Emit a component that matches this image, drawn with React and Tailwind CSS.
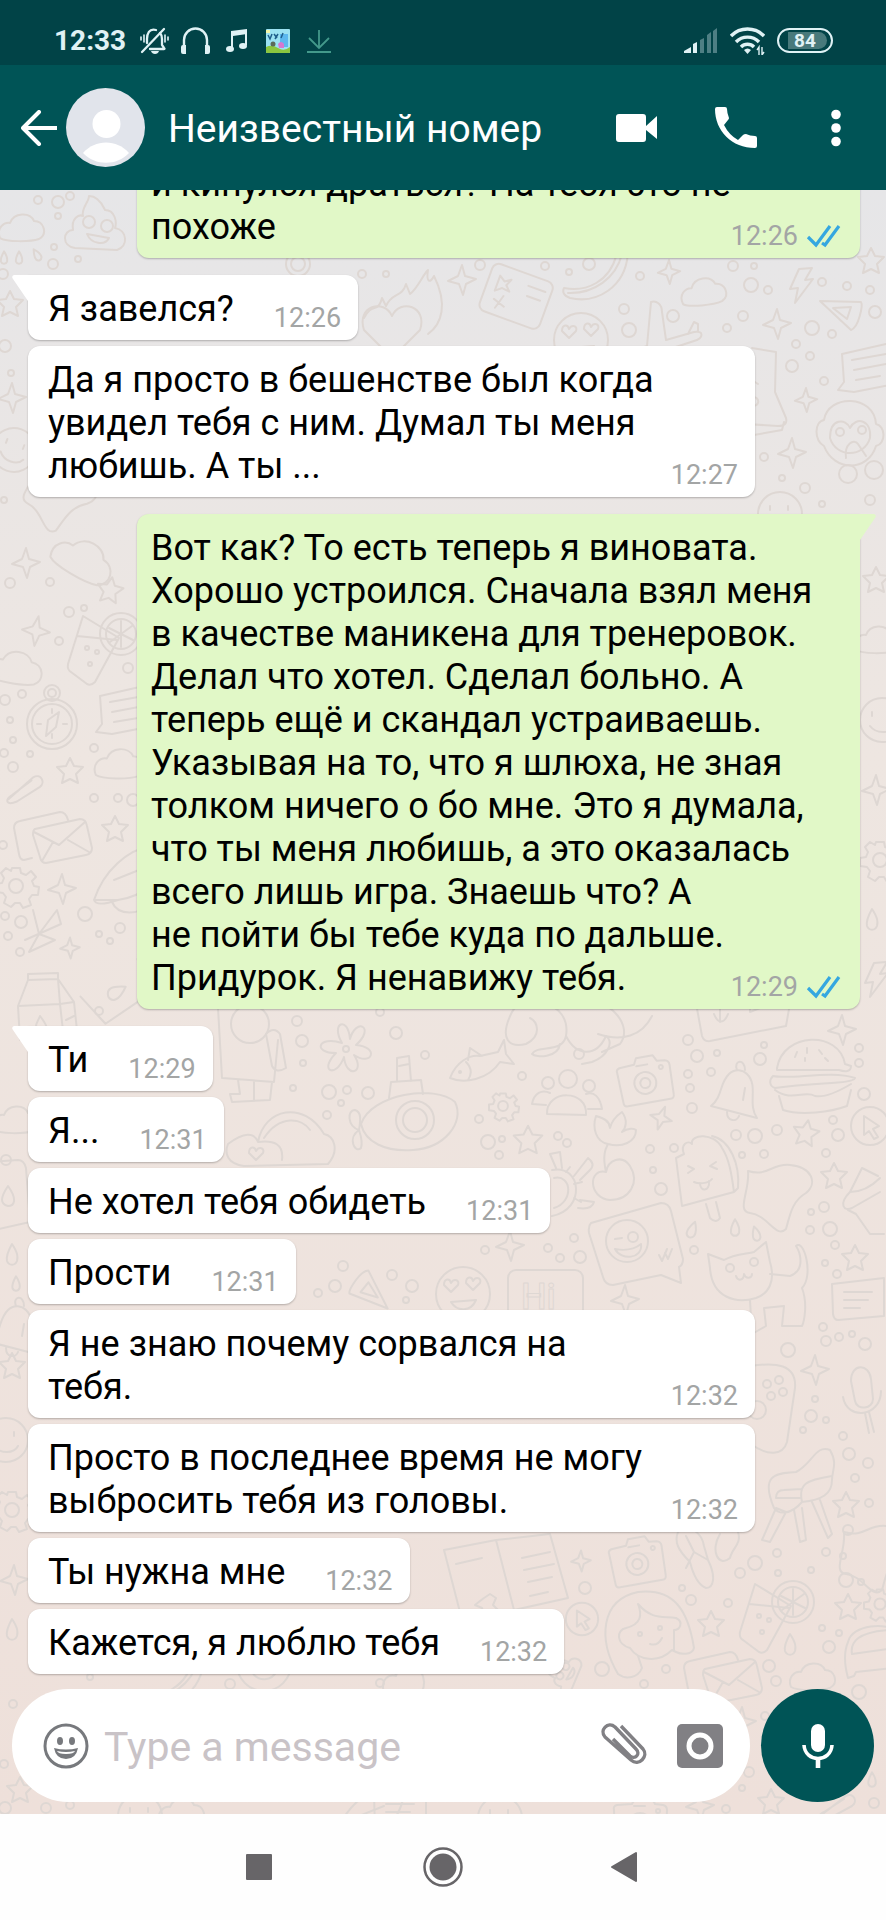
import React, { useState } from 'react';

const messages = [
  { id: 1, from: 'me', text: 'и кинулся драться? На тебя это не\nпохоже', time: '12:26', wide: true },
  { id: 2, from: 'them', text: 'Я завелся?', time: '12:26', first: true },
  { id: 3, from: 'them', text: 'Да я просто в бешенстве был когда\nувидел тебя с ним. Думал ты меня\nлюбишь. А ты ...', time: '12:27', wide: true },
  {
    id: 4,
    from: 'me',
    text: 'Вот как? То есть теперь я виновата.\nХорошо устроился. Сначала взял меня\nв качестве маникена для тренеровок.\nДелал что хотел. Сделал больно. А\nтеперь ещё и скандал устраиваешь.\nУказывая на то, что я шлюха, не зная\nтолком ничего о бо мне. Это я думала,\nчто ты меня любишь, а это оказалась\nвсего лишь игра. Знаешь что? А\nне пойти бы тебе куда по дальше.\nПридурок. Я ненавижу тебя.',
    time: '12:29',
    first: true,
    wide: true,
  },
  { id: 5, from: 'them', text: 'Ти', time: '12:29', first: true },
  { id: 6, from: 'them', text: 'Я...', time: '12:31' },
  { id: 7, from: 'them', text: 'Не хотел тебя обидеть', time: '12:31' },
  { id: 8, from: 'them', text: 'Прости', time: '12:31' },
  { id: 9, from: 'them', text: 'Я не знаю почему сорвался на\nтебя.', time: '12:32', wide: true },
  { id: 10, from: 'them', text: 'Просто в последнее время не могу\nвыбросить тебя из головы.', time: '12:32', wide: true },
  { id: 11, from: 'them', text: 'Ты нужна мне', time: '12:32' },
  { id: 12, from: 'them', text: 'Кажется, я люблю тебя', time: '12:32' },
];

// Wallpaper doodles, each drawn around 0,0
const shapes = {
  star4: <path d="M0-15 L3-4 L14-1 L4 4 L1 15 L-3 4 L-14 1 L-4-4Z" />,
  star5: <path d="M0-13 L4-5 L13-4 L6 3 L8 12 L0 8 L-8 12 L-6 3 L-13-4 L-4-5Z" />,
  cloud: <path d="M-22 10 C-26 0-18-6-12-5 C-8-16 8-16 12-7 C22-7 26 6 17 11 C8 14-16 14-22 10Z" />,
  drop: <path d="M0-11 C6-2 6 2 5 6 C3 11-3 11-5 6 C-6 2-5-2 0-11Z" />,
  bolt: <path d="M-2-17 L11-18 L4-6 L12-7 L-6 17 L-3 2 L-11 3Z" />,
  heart: <path d="M0 14 L-14 0 C-18-12-4-16 0-7 C4-16 18-12 14 0Z" />,
  poop: (
    <>
      <path d="M-20 28 C-34 26-32 10-22 10 C-24-2-16-6-12-4 C-14-12-6-18-6-24 C4-24 8-14 10-10 C20-10 22 2 20 8 C32 10 34 26 22 30Z" />
      <circle cx="-6" cy="2" r="6" /><circle cx="12" cy="6" r="6" />
      <path d="M-8 14 C-4 24 10 26 14 18Z" />
    </>
  ),
  card: (
    <>
      <rect x="-34" y="-25" width="64" height="50" rx="7" />
      <path d="M6-14h18M8-4h14M-24-14l6 4 6-4-3 7 5 5-8-1-6 5v-8Z M-22 10l12 4M-14 4l-4 14" />
    </>
  ),
  banana: <path d="M-30 14 C-10 18 18 10 24-26 C30-24 32-24 34-22 C32 14 2 30-24 24 C-30 22-32 18-30 14Z M-26 19 C0 20 22 4 28-20" />,
  lovely: (
    <>
      <circle r="27" />
      <path d="M-12-2 l-7-7 c0-7 6-7 7-2 c3-5 9-3 7 2Z M10-4 l-7-7 c0-7 6-7 7-2 c3-5 9-3 7 2Z M-12 8 C-6 18 8 18 13 6Z" />
    </>
  ),
  plane: <path d="M-30 26 L-13 20 L-9-24 C-4-26 2-22 2-14 L6 14 L34 6 C44 4 44 12 34 15 L-24 34 Z M28 8 L34-4 L38-2 L38 6" />,
  sail: <path d="M-21-12 L20-11 C22-8 18 14 10 17Z M-8-5 L10-6 L6 6Z" />,
  chat: (
    <>
      <path d="M-20-14 L24-24 Q30-24 32-18 L34 10 Q34 16 28 17 L-8 24 L-24 22 L-18 14Z" />
      <path d="M-10-8 L24-14M-8 2 L24-4M-6 12 L18 8" />
    </>
  ),
  monkey: (
    <>
      <path d="M-24 12 C-34 6-34-12-24-14 C-20-40 26-40 28-10 C38-8 38 10 28 12 C20 38-14 38-24 12Z" />
      <path d="M-18 4 C-18-16-2-16 2-6 C8-18 24-14 22 4 C16 24-12 24-18 4Z M-2 24 C-4 10 6 4 10 10 L18 22" />
      <circle cx="-8" cy="-2" r="4" /><circle cx="14" cy="-4" r="4" />
      <circle cx="0" cy="40" r="9" /><circle cx="26" cy="36" r="9" />
    </>
  ),
  bottle: <path d="M-16-50 L8-46 L7-6 L18 20 Q20 28 10 28 L-22 26 M-22-22 L-10-14M-22 6 C-14-10-4 6-14 8 M-20 38 L14 32 L16 24" />,
  cup: (
    <>
      <path d="M-10-36 L26-14 L2 30 Q-2 34-6 32 L-22 20 Q-26 18-25 12Z M-16-16 L24-12" />
      <circle cx="28" cy="-18" r="21" /><circle cx="28" cy="-18" r="15" />
      <path d="M28-31v26M16-24l24 12M17-10l22-16" />
      <circle cx="-6" cy="-4" r="2" /><circle cx="4" cy="0" r="2" /><circle cx="-3" cy="12" r="2" />
    </>
  ),
  compass: (
    <>
      <circle r="25" /><circle r="20" /><circle cy="-31" r="8" /><circle cy="-31" r="4" />
      <path d="M7-12 L4 3 L-6 12 L-4-4Z M-15 0h4M11 0h4M0 14v-4M0-15v4" />
    </>
  ),
  clip: <path d="M-16 10 L10-10 C18-14 22-4 16 0 L-8 13 C-20 17-20 10-12 6 L8-7" />,
  mail: (
    <>
      <path d="M-20 20 L-28 22 Q-32 22-33 16 L-38-10 Q-38-16-32-17 L8-26 Q14-26 16-18" />
      <path d="M-17-9 L28-19 Q34-19 35-12 L40 10 Q40 16 34 17 L-6 25 Q-11 25-12 19 L-19-3 Q-19-8-17-9Z M-18-6 L7 7 L33-16 M-10 23 L1 4M37 14 L16 2" />
    </>
  ),
  gear: (
    <>
      <circle r="7" />
      <path d="M-4-18h8l1 5 5 2 5-4 5 6-4 4 2 5 5 1-1 8-6 0-3 4 2 6-8 3-3-5h-5l-4 4-7-4 2-6-3-4-7-1v-8l6-1 2-5-3-5 5-5 5 3Z" />
    </>
  ),
  rocket: <path d="M-26 22 C-16-8 8-28 30-32 L44-22 C40 4 24 18-2 22Z M-26 22 C-24 28-14 26-2 22 M-6 2 L24-10 M-8 24 C-2 38 20 38 30 24" />,
  milk: <path d="M-28 10 L-18-16 L12-17 L28 6 L32 44 M-28 10 L14 8 L28 6M14 8 L12-17M-28 10 L-26 44M14 8 L18 44M-18-16v-6l30-1v6M-6 40 C-14 30-8 26-6 20 C0 28 4 34-2 40M20 24l8-4" />,
  rune: <path d="M-10-20 L-4 4 L14-20 L18-6 L-18 10 M-4 4 L-14 22 L12 10 L-4 4" />,
  fish: (
    <>
      <path d="M-30 16 C-24 0-10-8 0-6 L18-10 L24-22 L26-8 L34 2 L20 0 C8 18-16 22-30 16Z M-12-2 L-10-14 L2-6M-14 0 C-8 6-8 12-12 18" />
      <circle cx="-20" cy="10" r="1" />
    </>
  ),
  snake: <path d="M-50-18 C-40-38 10-30 4 6 C0 24-24 14-30 24 C-26 28-4 28-2 14 M-50-18 C-64 10-52 18-36 14 C-20 6-24-8-32-12 M4 6 C14 26 34 28 44 6 C52 12 46 26 30 32 L20 34 M14-30 C48-34 72-4 58 14 L40 22 M36 4 C60 12 80 6 90-14" />,
  camera: (
    <>
      <path d="M-26-12 Q-27-16-23-17 L-8-18 L-5-24 L12-24 L15-18 L23-17 Q27-16 27-12 L26 18 Q26 22 22 22 L-21 22 Q-25 22-25 18Z" />
      <circle cy="2" r="11" /><circle cy="2" r="5" /><circle cx="18" cy="-11" r="2" />
      <path d="M-6-16h11" />
    </>
  ),
  bell: <path d="M-24 12 C-12 2-16-10-6-20 C0-26 8-24 12-20 C24-8 12 10 22 24Z M2-24 C-2-34 10-36 10-24M-8 18 C-8 28 2 28 4 22M10-6 L8 6" />,
  burger: (
    <>
      <path d="M-34-8 C-28-44 28-46 34-12 L40-10 C40-4 34-4 28-6 L-34-6Z" />
      <path d="M-38 0 C-20 4 20-6 44 2 C42 8 10 6-36 12 C-42 10-42 4-38 0Z M-36 14 C-20 26-6 14 4 20 C14 22 30 14 40 8 M-32 20 L-28 34 C-10 40 20 36 36 30 L40 14" />
      <path d="M-14-24l-2 5M-4-28v5M8-26l3 4M-6-18v3M14-18l3 3" />
    </>
  ),
  people: (
    <>
      <circle cy="-16" r="9" /><circle cx="-20" cy="-12" r="6" /><circle cx="21" cy="-9" r="6" />
      <path d="M-21 19 C-22-6 20-6 18 20Z M-22 10 L-36 9 C-34-2-26-6-18-2 M20 14 L34 14 C32 2 26-4 18-1" />
    </>
  ),
  sprout: <path d="M-4 16 C-8-2-4-8-2-12 C-14-14-18-28-14-40 C-6-38 0-34 0-28 C2-36 6-40 12-44 C18-36 16-28 12-24 C18-28 24-28 26-26 C26-14 12-8-2-12 M-4 16 C-22 12-22 42 0 44 C20 44 30 26 20 10 C12-2-2 4-4 16" />,
  lolly: (
    <>
      <path d="M-26-16 L-18-20 C-22-30-14-34-10-30 C-12-40 12-42 20-26 C28-14 30 4 32 18 L-20 32Z M10-38 C28-34 38-10 36 14 L32 18" />
      <path d="M4 30 L8 44 Q14 50 18 44 L14 28M-14-8l6 3-6 4M14-12l-6 4 7 3M-8 8 C-4 10 6 10 10 5M-2 9 C-2 18 8 18 7 7" />
    </>
  ),
  pointer: (
    <>
      <circle r="19" />
      <path d="M-6-10 L9 0 L3 3 L8 11 L4 13 L-1 5 L-6 9Z" />
    </>
  ),
  blob: <path d="M-30-24 C-10-18-6-32 12-30 C34-28 40-12 28-2 C14 6 12 20 8 34 C-2 44-10 20-28 18 C-42 16-28-4-30-24Z" />,
  cone: <path d="M-18 2 L-6-22 L10-14 M-18 2 C-4 2 6-6 12-12M-18 2 C-30 14-24 22-16 18 L12 2M-20 20 L-12 24 L2 44 H16" />,
  speech: (
    <>
      <path d="M-44-18 L26-38 Q34-38 36-30 L48 18 Q48 24 44 26 L46 42 L26 34 L-22 44 Q-30 44-32 36 L-46-8 Q-47-15-44-18Z" />
      <circle cx="-8" cy="0" r="21" /><circle cx="-2" cy="-4" r="5" />
      <path d="M-20-2l7-1M-20 8 C-10 10 0 8 6 3 C8 18-14 20-20 8Z M24 14l3 6 5-12M30 12l3 6 4-10" />
    </>
  ),
  cat: (
    <>
      <path d="M-32-16 L-34-30 L-18-24 C-8-30 4-30 12-32 L24-42 L28-22 C34-2 26 10 14 14 C-6 20-30 14-32-16Z" />
      <circle cx="-12" cy="-16" r="4" /><circle cx="12" cy="-22" r="4" />
      <path d="M-6-8 C-4-2 2-4 2-10 C4-4 10-6 10-10M28-10 L48-8 C64-14 58-32 54-38 C62-46 72-8 60 4 C66 20 62 38 60 42 L40 42 L42 22 L22 24 L24 42 L10 50 L8 16" />
    </>
  ),
  note: (
    <>
      <path d="M-26-16 L26-22 L26 16 L-20 20 Q-24 20-25 14Z" />
      <path d="M-14-8h28M-14 0h24M-14 8h16" />
    </>
  ),
  turtle: (
    <>
      <path d="M-8-18 C22-24 26 22-8 28M-6-10 C12-14 14 14-6 20M6-16l4-5M14-4l8-2M14 10l7 4M-4-20 L-10-34 L0-36 L2-20M14-12 L28-30 Q36-24 30-18 L20-8M20 12 L34 14 Q32 22 18 20" />
    </>
  ),
  flower: (
    <>
      <path d="M-4-6 C-16-26 2-34 4-10 C10-32 30-22 10-4 C34-2 26 18 8 6 C20 24 0 30-2 8 C-10 30-28 22-10 4 C-34 4-28-14-4-6Z" />
      <circle r="3" />
    </>
  ),
  sub: (
    <>
      <path d="M-44 6 C-34-24 30-34 50-16 C60 4 40 30 8 32 C-20 34-40 24-44 6Z M-16-20 L-14-36 L16-38 L18-24M-8-37 L-8-60 L4-62 L6-37M-6-52l10-2M-46 12 C-58 8-58-8-50-8 C-44-6-44 0-46 12 C-58 20-50 36-44 30 C-42 24-44 18-46 12" />
      <circle cx="10" cy="2" r="19" /><circle cx="10" cy="2" r="12" />
    </>
  ),
  astronaut: (
    <>
      <circle r="19" cy="-36" />
      <path d="M-32-52 L-28 18 L24 22 L28-20 M16-26 Q24-34 30-26 L36 8 Q26 14 22 6Z M-12 20 L-10 34 L-20 34 L-18 42 L20 40 L22 22M4 22v18" />
    </>
  ),
  walrus: (
    <>
      <path d="M-56 14 C-40 2-30 2-26 12 C-20-22 20-30 40 4 C50 6 56 20 44 34 L-40 36 C-56 34-60 24-56 14Z M-20 8 C-4-16 18-12 26 0M-26 12 C-10 10 0 14-2 30" />
      <path d="M-28 30 l-7-7 c0-7 6-7 7-2 c3-5 9-3 7 2Z" />
    </>
  ),
  chair: <path d="M-36 36 L-22 4 L-12 8 L-28 38Z M-4 6 L2 38 L8 36 L4 4M14-2 L30 34 L34 30 L22-4M-24 4 C-40-34-16-30-2-32 C14-40 18-60 32-54 C40-40 34-34 34-24 C34-10 24-4 4-2 C-8 12-20 10-24 4Z M4-2 C0-20 8-24 34-28M-22-6 Q-22-14-14-14 L4-15M-22-6 L2-6" />,
  pad: (
    <>
      <path d="M-24-44 C0-48 22-46 20-22 L12 32 C8 46-8 46-24 34" />
      <circle cx="-8" cy="-26" r="4" /><circle cx="4" cy="-30" r="4" /><circle cx="-4" cy="-14" r="4" /><circle cx="8" cy="-18" r="4" /><circle cx="-18" cy="0" r="9" />
    </>
  ),
  mic: <path d="M-10-14 C-10-32 8-32 10-16 L12 4 C12 14-4 16-6 6Z M-18 2 C-14 26 20 22 20-4M4 18 L8 38M8 17 L13 37" />,
  book: (
    <>
      <path d="M-56-24 L-4-34 L14 36 L-38 46Z M-4-34 L50-40 L68 24 L14 36" />
      <path d="M-44-10l26-6M-16 24 l6-4 6 4-3 7 5 5-8 1-6 5-2-8-7-3 5-4ZM22-16l28-6M24-4l30-6M28 8l24-5M30 22l18-4" />
    </>
  ),
  girl: (
    <>
      <path d="M-30 44 C-50 10-48-30-10-38 C26-42 40-20 46 18 C44 26 32 24 28 22 L24 20 C10 34-10 30-18 18 C-32 14-32 0-22-2 C-6-6-6-16-10-26 C4-10 14-14 28-12 C36-8 32 0 26 0 L26 20 M-30 44 C-22 50-10 48-6 38 L-10 26" />
      <path d="M2 14 C8 16 12 12 14 8" /><circle cx="-8" cy="4" r="2" /><circle cx="12" cy="-2" r="2" />
    </>
  ),
  sandals: <path d="M-32-30 C-20-40-8-28-6-16 L-2-2 C6 14 4 26-4 26 C-14 22-18 8-20 0 C-32-12-36-20-32-30Z M-24-26 L-16-10 L-24 6M-16-10 L-2-2M10-28 C0-12 8 6 20-4 C22-14 32-18 28-30" />,
  car: <path d="M-20-14 C-16-32 20-34 30-24M-16-2 L28-8M-14 20 L-20 22 Q-26 0-20-14 M-16-2 C-18-14-10-24 20-26M-14 20 L-12 16 L26 12" />,
  flag: <path d="M-36-30 L-28 14 Q-26 20-20 19 L56 4 M56 4 L62-30M-10-20v20M-16-8 C-12 2-6 2-2-8M20-20v10l10-4" />,
  tub: <path d="M-16-34 L12-36 Q18-36 20-28 L24 26 L-12 34M2-10 C12 4 8 10 2 10 C-6 8-6 2 2-10Z" />,
  face: (
    <>
      <circle r="22" />
      <path d="M-10-4v-4M8-4v-4M-12 6 C-6 14 8 14 12 6" />
    </>
  ),
  flame: <path d="M-34 18 C-26 2-20 14-16-2 L-12 6 C-6-8 4-2 8-16 L12-6 C20-12 24-24 30-30 C28-18 32-16 36-24 C50 4 44 24 30 34" />,
  sign: <rect x="-38" y="-20" width="75" height="60" rx="8" />,
};

// name, x, y, angle, size
const doodles = [
  ['cloud', 22, 228], ['poop', 95, 220], ['drop', 4, 258, 0, 0.6], ['drop', 19, 258, 0, 0.6], ['drop', 37, 255, -30, 0.6],
  ['star4', 462, 280], ['card', 518, 297, 20], ['banana', 594, 274], ['star4', 669, 272, 0, 0.8], ['cloud', 704, 292, -6], ['bolt', 801, 286],
  ['sail', 841, 313], ['star5', 871, 261], ['star4', 777, 324], ['lovely', 581, 340], ['plane', 660, 326], ['chat', 862, 368], ['monkey', 848, 434],
  ['bottle', 768, 398], ['star4', 806, 400, 0, 0.8], ['star4', 792, 453], ['face', 780, 514], ['heart', 392, 330, 0, 2], ['flame', 398, 300],
  ['star5', 10, 304], ['star4', 12, 398], ['face', 14, 450, 20], ['blob', 60, 496, 20], ['cloud', 84, 560, 30, 1.4], ['star4', 26, 563],
  ['star5', 110, 590, 10], ['star4', 36, 631, 10], ['cup', 93, 652], ['cloud', 16, 668, 10, 1.2], ['compass', 52, 724], ['chat', 120, 710],
  ['star5', 70, 771], ['clip', 24, 788, -4], ['cloud', 120, 764, 0, 1.1], ['mail', 52, 838], ['star5', 115, 829], ['gear', 16, 886], ['star4', 62, 889],
  ['rocket', 120, 878], ['rune', 43, 930], ['star4', 70, 948, 0, 0.7], ['milk', 46, 996], ['tub', 116, 990, 60], ['star5', 876, 580], ['cloud', 878, 640],
  ['face', 882, 720], ['star4', 876, 790], ['gear', 880, 860], ['drop', 872, 920], ['bolt', 876, 980],
  ['snake', 562, 1030], ['fish', 480, 1062], ['camera', 645, 1081, -10], ['bell', 735, 1094], ['burger', 811, 1076], ['people', 568, 1095],
  ['gear', 503, 1106, 0, 0.7], ['star5', 528, 1140, 0, 1.1], ['star4', 661, 1118, 20, 0.8], ['sprout', 610, 1156], ['lolly', 702, 1174], ['star5', 806, 1133, 10],
  ['pointer', 870, 1126], ['blob', 778, 1195], ['star5', 834, 1176], ['cone', 868, 1190], ['speech', 635, 1241], ['cat', 742, 1284], ['star5', 855, 1258],
  ['note', 858, 1300], ['star4', 625, 1300], ['lovely', 463, 1294], ['turtle', 560, 1188], ['flag', 730, 1022], ['drop', 692, 1230, 20, 0.8],
  ['drop', 735, 1228, 0, 0.8], ['drop', 756, 1234, -15, 0.7], ['star4', 842, 1030], ['flower', 346, 1049], ['sub', 405, 1118], ['astronaut', 250, 1060],
  ['walrus', 284, 1130], ['star4', 510, 1246], ['sail', 372, 1290, 200], ['tub', 6, 1196], ['drop', 12, 1255], ['drop', 16, 1284, 0, 0.7],
  ['bell', 14, 1330], ['star5', 12, 1366], ['cloud', 16, 1120], ['face', 6, 1440], ['gear', 12, 1510], ['star4', 14, 1580], ['drop', 12, 1630],
  ['sign', 546, 1290], ['pad', 775, 1410], ['mic', 861, 1395], ['star4', 815, 1370], ['chair', 798, 1504], ['camera', 637, 1562, -10], ['book', 500, 1574],
  ['star4', 581, 1561, 0, 0.7], ['sandals', 710, 1562], ['girl', 648, 1630], ['star5', 846, 1505], ['blob', 874, 1556], ['cup', 765, 1620],
  ['star5', 711, 1624], ['star5', 848, 1607], ['gear', 880, 1604, 0, 0.8], ['drop', 790, 1645], ['cloud', 813, 1677], ['pointer', 582, 1619, 0, 0.85],
  ['mail', 722, 1678], ['car', 868, 1656], ['poop', 560, 1672, -70, 0.6], ['banana', 170, 1680], ['lovely', 264, 1664],
  ['sprout', 400, 1660], ['star5', 20, 1790], ['face', 140, 1816], ['cloud', 182, 1812], ['rocket', 360, 1816], ['note', 400, 1812], ['face', 500, 1818],
  ['camera', 640, 1822], ['star4', 700, 1806], ['star5', 771, 1802], ['star4', 742, 1722], ['clip', 836, 1806], ['drop', 872, 1780, 0, 0.7],
];

const dots = [
  [58, 202, 6], [38, 200, 4], [70, 196, 4], [58, 216, 3], [54, 247, 3], [53, 264, 5], [78, 259, 3], [3, 274, 5], [5, 346, 6], [11, 373, 3], [4, 500, 3],
  [298, 264, 12], [298, 264, 7], [362, 274, 4], [386, 274, 3], [480, 265, 5], [545, 266, 4], [569, 272, 3], [589, 264, 6], [640, 276, 4], [733, 266, 5],
  [754, 266, 3], [751, 285, 7], [768, 290, 4], [822, 282, 4], [847, 286, 4], [870, 290, 4], [875, 312, 6], [743, 316, 5], [727, 328, 4], [673, 316, 6],
  [624, 309, 5], [629, 330, 7], [812, 328, 7], [832, 334, 4], [796, 344, 4], [810, 356, 4], [792, 366, 6], [824, 381, 4], [764, 457, 4], [782, 478, 3],
  [805, 488, 5], [822, 504, 3], [870, 500, 5], [50, 582, 4], [10, 583, 5], [69, 612, 5], [84, 608, 3], [59, 641, 4], [128, 668, 5], [5, 700, 5],
  [22, 694, 4], [10, 720, 3], [13, 740, 3], [30, 754, 3], [94, 748, 4], [13, 767, 5], [4, 753, 4], [94, 798, 4], [118, 798, 4], [133, 800, 6],
  [3, 845, 4], [85, 914, 7], [120, 928, 5], [99, 934, 3], [110, 941, 3], [5, 916, 4], [21, 922, 6], [8, 936, 4], [20, 952, 4], [99, 1011, 4],
  [688, 1040, 5], [697, 1056, 6], [717, 1053, 3], [764, 1045, 3], [760, 1059, 6], [711, 1072, 4], [688, 1074, 4], [690, 1088, 4], [692, 1108, 5],
  [859, 1048, 4], [859, 1063, 4], [864, 1094, 6], [833, 1120, 4], [838, 1135, 6], [777, 1130, 5], [755, 1136, 7], [736, 1135, 5], [742, 1155, 3],
  [764, 1154, 4], [826, 1153, 4], [579, 1054, 5], [522, 1076, 4], [479, 1119, 4], [488, 1142, 7], [502, 1139, 3], [499, 1155, 4], [558, 1136, 4],
  [567, 1143, 4], [650, 1149, 4], [674, 1148, 4], [661, 1189, 6], [653, 1170, 3], [824, 1207, 5], [811, 1212, 3], [830, 1229, 7], [810, 1230, 4],
  [835, 1245, 4], [825, 1263, 3], [837, 1274, 4], [574, 1238, 4], [580, 1257, 6], [560, 1258, 4], [548, 1248, 4], [694, 1250, 4], [485, 1250, 4],
  [823, 1327, 4], [826, 1341, 5], [839, 1337, 4], [852, 1334, 3], [865, 1344, 6], [788, 1350, 7], [297, 1021, 5], [302, 1041, 6], [303, 1063, 3],
  [380, 1012, 4], [396, 1033, 6], [425, 1055, 4], [293, 1088, 3], [329, 1092, 7], [347, 1090, 4], [368, 1093, 6], [341, 1103, 3], [327, 1115, 4],
  [6, 1160, 5], [343, 1266, 5], [335, 1286, 6], [318, 1293, 4], [392, 1275, 5], [412, 1286, 6], [406, 1300, 3], [811, 1416, 6], [815, 1399, 3],
  [803, 1430, 3], [826, 1420, 3], [843, 1436, 4], [849, 1454, 6], [868, 1463, 5], [855, 1478, 4], [869, 1503, 4], [848, 1530, 5], [777, 1553, 4],
  [826, 1552, 4], [843, 1556, 3], [755, 1563, 7], [740, 1573, 5], [778, 1573, 3], [811, 1570, 3], [691, 1600, 5], [682, 1588, 3], [728, 1603, 4],
  [846, 1580, 7], [861, 1582, 3], [822, 1628, 3], [839, 1633, 3], [829, 1647, 6], [769, 1666, 6], [776, 1681, 5], [585, 1588, 6], [602, 1669, 7],
  [666, 1669, 4], [644, 1684, 4], [859, 1692, 7], [765, 1716, 4], [749, 1772, 5], [742, 1788, 3], [726, 1809, 4], [874, 1803, 5], [13, 1704, 4],
  [4, 1764, 4], [46, 1808, 5], [70, 1805, 4], [5, 1808, 6], [230, 1684, 5], [380, 1683, 4], [90, 1677, 3],
];

function Wallpaper() {
  return (
    <svg
      className="pointer-events-none absolute inset-0 h-full w-full [&_*]:[vector-effect:non-scaling-stroke]"
      viewBox="0 190 886 1624"
      preserveAspectRatio="xMidYMid slice"
      fill="none"
      stroke="#ded7d3"
      strokeWidth="2"
      strokeLinejoin="round"
      strokeLinecap="round"
      aria-hidden="true"
    >
      {doodles.map(([name, x, y, angle = 0, size = 1], i) => (
        <g key={i} transform={`translate(${x} ${y}) rotate(${angle}) scale(${size})`}>
          {shapes[name]}
        </g>
      ))}
      {dots.map(([x, y, r], i) => (
        <circle key={i} cx={x} cy={y} r={r} />
      ))}
      <text x="521" y="1309" fontSize="36" fontWeight="500" strokeWidth="1">Hi</text>
    </svg>
  );
}

function StatusBar() {
  return (
    <div className="flex h-[65px] shrink-0 items-center justify-between bg-[#014347] pt-4 pr-[53px] pl-[54px] text-[#e0f2f5]">
      <div className="flex items-center gap-3">
        <span className="pr-0.5 text-[28px] leading-8 font-bold">12:33</span>
        {/* silent + vibrate */}
        <svg width="29" height="28" viewBox="0 0 29 28" fill="none" stroke="currentColor" strokeWidth="2.300" strokeLinecap="round">
          <path d="M10 22h14q1 0 0-1l-2-3v-6c0-3-1-5-2-6M16 3C9 1 7 7 7 12v4" />
          <path d="M2 25L24 2" />
          <path d="M11 24c1 4 7 4 8 0z" fill="currentColor" stroke="none" />
          <path d="M4 8v7M1 10v3M25 8v7M28 10v3" strokeWidth="1.600" />
        </svg>
        <svg width="29" height="28" viewBox="0 0 29 28" fill="none" stroke="currentColor" strokeWidth="2.400">
          <path d="M3 24V13a11.500 11.500 0 0 1 23 0v11" />
          <path d="M0 20q0-2 2-2h3v9H2q-2 0-2-2zM29 20q0-2-2-2h-3v9h3q2 0 2-2z" fill="currentColor" stroke="none" />
        </svg>
        <svg width="29" height="28" viewBox="0 0 29 28" fill="currentColor">
          <path d="M9 4l16-2v5L11 9v13H9z" />
          <path d="M23 4h2v14h-2z" />
          <ellipse cx="8" cy="22" rx="4" ry="3" />
          <ellipse cx="21" cy="19" rx="4" ry="3" />
        </svg>
        {/* game shortcut */}
        <svg width="29" height="28" viewBox="0 0 29 28">
          <rect x="3" y="2" width="24" height="24" rx="1" fill="#9be2f2" />
          <path d="M3 20q6-3 12 1t12-1v5q0 1-1 1H4q-1 0-1-1z" fill="#8cc63f" />
          <path d="M17 7h8v13h-8z" fill="#5cb8ee" />
          <path d="M5 8l2 4 2-5M11 7l3 4M15 7l-3 5M20 6l-2 5" stroke="#1f5f8c" strokeWidth="1.500" fill="none" />
          <circle cx="10" cy="17" r="2.500" fill="#5b6a5a" />
          <path d="M15 17q3-4 6 0v4h-5z" fill="#d678cf" />
          <path d="M3 3h4v3H3z" fill="#f3f6a8" />
        </svg>
        <svg width="29" height="28" viewBox="0 0 29 28" fill="none" stroke="#43998b" strokeWidth="1.800">
          <path d="M15 3v18M5 11l10 10 10-10M3 25h24" />
        </svg>
      </div>
      <div className="flex items-center gap-3">
        <svg width="34" height="28" viewBox="0 0 34 28" fill="currentColor">
          <path d="M0 26v-2l7-4v6z" />
          <path d="M9 26v-9l4-2v11z" />
          <path d="M16 26V13l4-2v15zM23 26V8l4-3v21zM29 26V4l4-3v25z" opacity=".35" />
        </svg>
        <svg width="35" height="28" viewBox="0 0 35 28" fill="none" stroke="currentColor" strokeWidth="3.400">
          <path d="M1 9a23 23 0 0 1 33 0" />
          <path d="M6 15a16 16 0 0 1 23 0" />
          <path d="M11 20a9 9 0 0 1 13 0" />
          <path d="M14 23q3.500-3 7 0l-3.500 4z" fill="currentColor" stroke="none" />
          <path d="M29 28v-8l-2 3M32 20v8l2-3" strokeWidth="1.400" />
        </svg>
        <div className="relative flex h-[25px] w-[56px] items-center justify-center overflow-hidden rounded-full border-2 border-current">
          <div className="absolute inset-y-[2px] right-1 left-[9px] rounded-r-full bg-[#48797b]" />
          <span className="relative text-[19px] leading-5 font-bold">84</span>
        </div>
      </div>
    </div>
  );
}

function ChatHeader() {
  return (
    <header className="flex h-[125px] shrink-0 items-center bg-[#005456] pr-[26px] pl-[21px] text-white">
      <button type="button" aria-label="Back" className="mr-[9px]">
        <svg width="36" height="36" viewBox="0 0 36 36" fill="none" stroke="currentColor" strokeWidth="4" strokeLinecap="round" strokeLinejoin="round">
          <path d="M18 2L2 18l16 16" />
          <path d="M3 18h33" strokeLinecap="butt" />
        </svg>
      </button>
      <svg className="mr-[23px] size-[79px] shrink-0" viewBox="0 0 79 79">
        <circle cx="39.500" cy="39.500" r="39.500" fill="#e1e4eb" />
        <circle cx="40.500" cy="36" r="14" fill="#fff" />
        <path d="M17 65c12-14 34-14 46 0-12 13-34 13-46 0z" fill="#fff" />
      </svg>
      <h1 className="min-w-0 flex-1 truncate pt-[3px] text-[39px] leading-[48px]">Неизвестный номер</h1>
      <div className="flex gap-[52px]">
        <button type="button" aria-label="Video call">
          <svg width="48" height="48" viewBox="0 0 48 48" fill="currentColor">
            <path d="M6 10h25q3 0 3 3v9l11-10v23L34 26v9q0 3-3 3H7q-3 0-3-3V13q0-3 3-3z" />
          </svg>
        </button>
        <button type="button" aria-label="Call">
          <svg width="48" height="48" viewBox="0 0 48 48" fill="currentColor">
            <path d="M5 3h8q2 0 2 2 0 4 2 9 0 1-1 2l-4 5q5 10 14 15l5-5q1-1 3-1 4 2 9 2 2 0 2 2v8q0 2-2 2C20 44 3 27 3 5q0-2 2-2z" />
          </svg>
        </button>
        <button type="button" aria-label="Menu">
          <svg width="48" height="48" viewBox="0 0 48 48" fill="currentColor">
            <circle cx="24" cy="10.500" r="4.800" />
            <circle cx="24" cy="24" r="4.800" />
            <circle cx="24" cy="37.500" r="4.800" />
          </svg>
        </button>
      </div>
    </header>
  );
}

function Bubble({ message }) {
  const { from, text, time, first, wide } = message;
  const mine = from === 'me';

  return (
    <div
      className={[
        'relative flex items-end rounded-xl pt-[13px] pb-2 shadow-[0_1px_2px_rgba(0,0,0,0.25)]',
        mine ? 'self-end bg-[#e1f8c7] pr-[18px] pl-[14px]' : 'self-start bg-white pr-[17px] pl-5',
        wide ? (mine ? 'w-full max-w-[723px]' : 'w-full max-w-[727px]') : 'gap-10',
        first ? 'mt-[11px]' : '',
        first && (mine ? 'rounded-tr-none' : 'rounded-tl-none'),
      ].join(' ')}
    >
      {first && (
        <svg
          className={mine ? 'absolute top-0 -right-4' : 'absolute top-0 -left-4 -scale-x-100'}
          width="17"
          height="28"
          viewBox="0 0 17 28"
          fill={mine ? '#e1f8c7' : '#ffffff'}
        >
          <path d="M0 0h15q3 1 1 4L1 26v2H0z" />
        </svg>
      )}
      {/* min-w-0 lets long lines run above the time */}
      <p className="min-w-0 flex-1 pb-px text-[36px] leading-[43px] whitespace-pre text-black">{text}</p>
      <div className="flex items-center gap-2 text-[27px] leading-[27px] text-[#a3a5a5]">
        <time>{time}</time>
        {mine && (
          <svg width="36" height="24" viewBox="0 0 36 24" fill="none" stroke="#35a7e0" strokeWidth="3.200">
            <path d="M2 12l8 8L24 1M16 18l3 2L33 1" />
          </svg>
        )}
      </div>
    </div>
  );
}

function Composer() {
  const [text, setText] = useState('');

  return (
    <form className="relative flex shrink-0 items-center gap-[11px] px-3 pb-3" onSubmit={(e) => e.preventDefault()}>
      <div className="flex h-[113px] min-w-0 flex-1 items-center rounded-full bg-white pr-[26px] pl-[30px] text-[#818084]">
        <button type="button" aria-label="Emoji" className="mr-[14px]">
          <svg width="48" height="48" viewBox="0 0 48 48" fill="none" stroke="#77797d" strokeWidth="3">
            <circle cx="24" cy="24" r="21" />
            <ellipse cx="18" cy="19" rx="3" ry="4" fill="#77797d" stroke="none" />
            <ellipse cx="30" cy="19" rx="3" ry="4" fill="#77797d" stroke="none" />
            <path d="M12 26q12 3 24 0-2 11-12 11t-12-11z" fill="#77797d" stroke="none" />
            <path d="M15 29q9 2 18 0-1 3-9 3t-9-3z" fill="#fff" stroke="none" />
          </svg>
        </button>
        <input
          type="text"
          aria-label="Message"
          placeholder="Type a message"
          value={text}
          onChange={(e) => setText(e.target.value)}
          className="h-16 min-w-0 flex-1 bg-transparent pt-0.5 text-[41px] text-black outline-none placeholder:text-[#c9c3c7]"
        />
        <button type="button" aria-label="Attach" className="mr-7">
          <svg width="48" height="48" viewBox="0 0 48 48" fill="none" stroke="currentColor" strokeWidth="3.400" strokeLinejoin="round">
            <path d="M21 4l22 23c6 7-4 18-12 11L5 15C-1 8 8-1 15 5l21 22c5 5-1 11-6 7L13 17" />
          </svg>
        </button>
        <button type="button" aria-label="Camera">
          <svg width="48" height="48" viewBox="0 0 48 48">
            <rect x="1" y="2" width="46" height="44" rx="5" fill="currentColor" />
            <circle cx="24" cy="24" r="11" fill="none" stroke="#fff" strokeWidth="5" />
          </svg>
        </button>
      </div>
      <button type="button" aria-label="Voice message" className="flex size-[113px] shrink-0 items-center justify-center rounded-full bg-[#005456] text-white">
        <svg width="34" height="46" viewBox="0 0 34 46" fill="none" stroke="currentColor" strokeWidth="3.600">
          <rect x="10" y="1" width="14" height="28" rx="7" fill="currentColor" stroke="none" />
          <path d="M3 22c1 18 27 18 28 0" />
          <path d="M17 35v10" strokeWidth="4.600" />
        </svg>
      </button>
    </form>
  );
}

function NavBar() {
  return (
    <nav className="flex h-[106px] shrink-0 items-center justify-center bg-[#fefefe] text-[#676568]">
      <button type="button" aria-label="Recents" className="flex w-[184px] justify-center">
        <svg width="40" height="40" viewBox="0 0 40 40" fill="currentColor">
          <rect x="7" y="7" width="26" height="26" rx="1" />
        </svg>
      </button>
      <button type="button" aria-label="Home" className="flex w-[184px] justify-center">
        <svg width="40" height="40" viewBox="0 0 40 40" fill="currentColor">
          <circle cx="20" cy="20" r="13.500" />
          <circle cx="20" cy="20" r="18.500" fill="none" stroke="currentColor" strokeWidth="2.500" />
        </svg>
      </button>
      <button type="button" aria-label="Back" className="flex w-[184px] justify-center">
        <svg width="40" height="40" viewBox="0 0 40 40" fill="currentColor" stroke="currentColor" strokeWidth="2" strokeLinejoin="round">
          <path d="M5 20L29 6v28z" />
        </svg>
      </button>
    </nav>
  );
}

export default function App() {
  return (
    <div className="flex h-screen flex-col overflow-hidden bg-white font-['Roboto',sans-serif]">
      <StatusBar />
      <ChatHeader />
      <section className="relative flex min-h-0 flex-1 flex-col overflow-hidden bg-linear-to-b from-[#e6e6e8] via-[#eee6e1] via-35% to-[#eee0da]">
        <Wallpaper />
        <main className="relative flex min-h-0 flex-1 flex-col justify-end gap-[6px] overflow-hidden pr-[26px] pb-[15px] pl-7">
          {messages.map((message) => (
            <Bubble key={message.id} message={message} />
          ))}
        </main>
        <Composer />
      </section>
      <NavBar />
    </div>
  );
}
